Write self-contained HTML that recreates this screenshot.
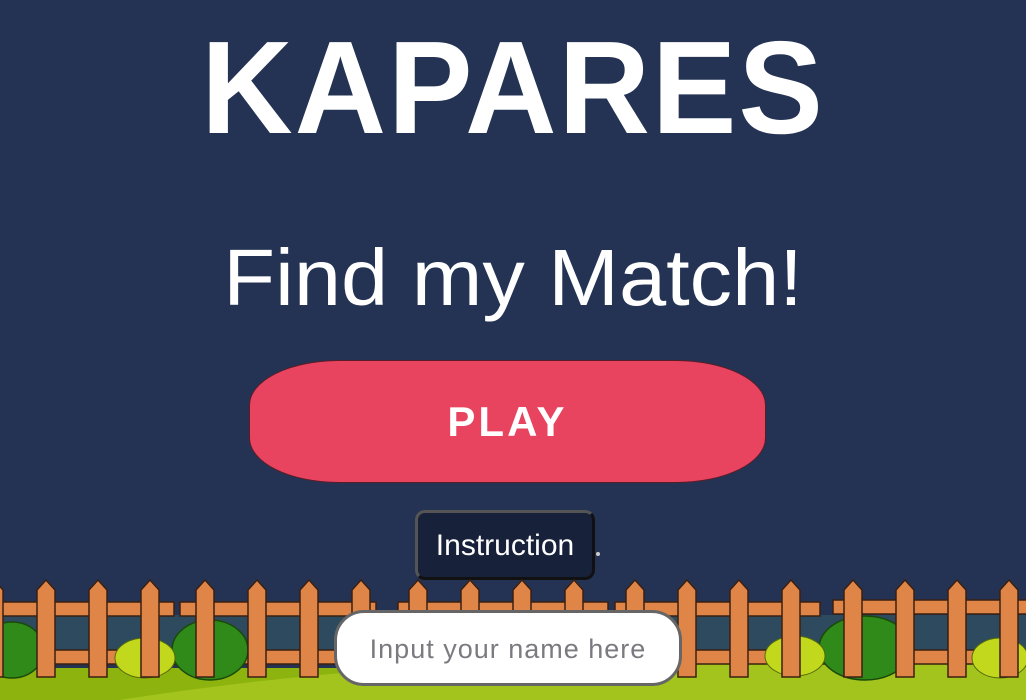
<!DOCTYPE html>
<html><head><style>
html,body{margin:0;padding:0;width:1026px;height:700px;overflow:hidden;background:#243354;font-family:"Liberation Sans",sans-serif;}
.t{position:absolute;left:0;width:1026px;text-align:center;color:#fff;}
#k{top:22px;font-size:132px;font-weight:bold;line-height:132px;transform:scaleX(0.96);letter-spacing:2px}
#f{top:238px;font-size:80px;line-height:80px;transform:scaleX(1.06)}
#play{position:absolute;left:249px;top:360px;width:515px;height:121px;background:#e8435f;border:1px solid #5a1d28;border-radius:90px/45px;color:#fff;font-weight:900;font-size:42px;text-align:center;line-height:121px;letter-spacing:3px}
#ins{position:absolute;left:415px;top:510px;width:174px;height:64px;background:#18213a;border:3px solid #555;border-right-color:#111;border-bottom-color:#111;border-radius:10px;color:#fff;font-size:30px;text-align:center;line-height:66px}
#dot{position:absolute;left:596px;top:552px;width:4px;height:4px;border-radius:2px;background:#ccc}
#inp{position:absolute;left:334px;top:610px;width:342px;height:70px;background:#fff;border:3px solid #666;border-radius:30px;color:#7a7a80;font-size:27px;text-align:center;line-height:72px;letter-spacing:1px}
svg{position:absolute;left:0;top:560px}
</style></head><body>
<div class="t" id="k">KAPARES</div>
<div class="t" id="f">Find my Match!</div>
<div id="play">PLAY</div>
<div id="ins">Instruction</div><div id="dot"></div>
<svg width="1026" height="140" viewBox="0 560 1026 140">
<rect x="0" y="615" width="1026" height="40" fill="#2e4a5f"/>
<rect x="0" y="668" width="1026" height="32" fill="#8db40e"/>
<path d="M120 700 Q500 640 1026 660 L1026 700Z" fill="#a3c41c"/>
<g fill="#e08548" stroke="#3a2010" stroke-width="1.5">
<rect x="-2" y="602" width="176" height="14"/><rect x="180" y="602" width="196" height="14"/>
<rect x="398" y="602" width="210" height="14"/><rect x="615" y="602" width="205" height="14"/><rect x="833" y="600" width="200" height="14"/>
<rect x="-2" y="650" width="1030" height="14"/>
</g>
<g fill="#2f8a1a" stroke="#1a4a0a" stroke-width="1.5">
<ellipse cx="12" cy="650" rx="32" ry="28"/><ellipse cx="210" cy="650" rx="38" ry="30"/><ellipse cx="865" cy="648" rx="46" ry="32"/>
</g>
<g fill="#c2d81c" stroke="#556a0a" stroke-width="1">
<ellipse cx="145" cy="658" rx="30" ry="20"/><ellipse cx="795" cy="656" rx="30" ry="20"/><ellipse cx="1000" cy="658" rx="28" ry="20"/><ellipse cx="375" cy="660" rx="28" ry="18"/>
</g>
<g fill="#e08548" stroke="#3a2010" stroke-width="1.5">
<path id="p" d="M-9 677 V590 L0 580 L9 590 V677Z" transform="translate(-6 0)"/>
<use href="#p" x="52"/><use href="#p" x="104"/><use href="#p" x="156"/><use href="#p" x="211"/><use href="#p" x="263"/><use href="#p" x="315"/><use href="#p" x="367"/><use href="#p" x="424"/><use href="#p" x="476"/><use href="#p" x="528"/><use href="#p" x="580"/><use href="#p" x="641"/><use href="#p" x="693"/><use href="#p" x="745"/><use href="#p" x="797"/><use href="#p" x="859"/><use href="#p" x="911"/><use href="#p" x="963"/><use href="#p" x="1015"/>
</g>
</svg>
<div id="inp">Input your name here</div>
</body></html>
